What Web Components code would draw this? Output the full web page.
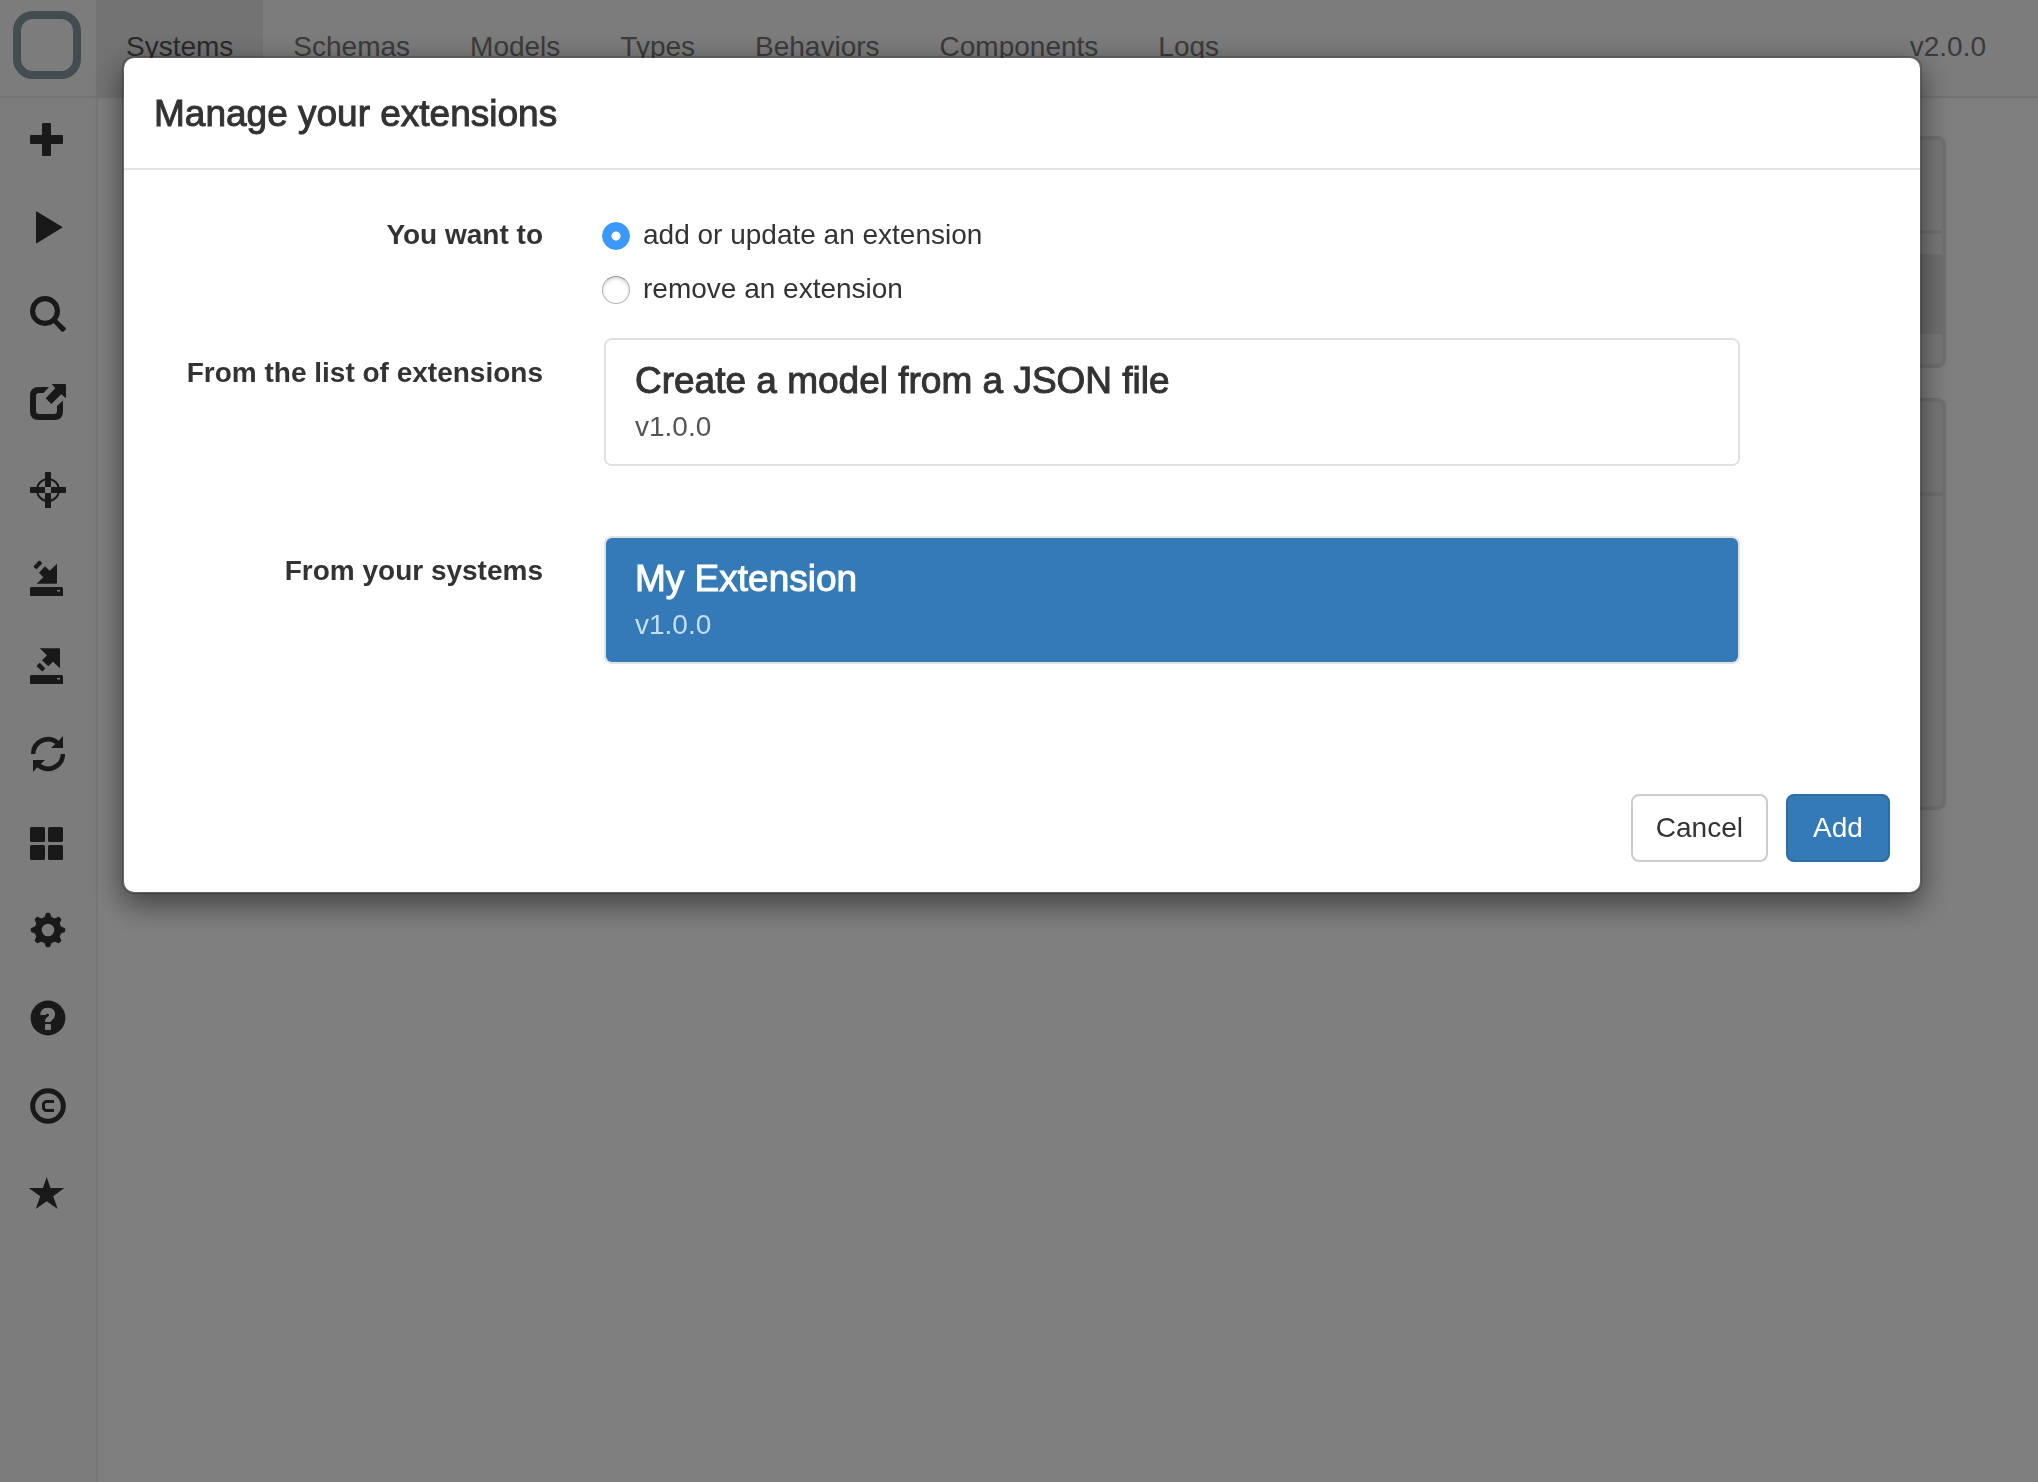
<!DOCTYPE html>
<html lang="en">
<head>
<meta charset="utf-8">
<meta name="viewport" content="width=device-width, initial-scale=1">
<title>Manage your extensions</title>
<style>
  :root {
    --bar: #f8f8f8;
    --line: #e7e7e7;
    --panel-bg: #f3f3f3;
    --panel-line: #e2e2e2;
    --text: #333;
    --muted: #777;
    --primary: #337ab7;
  }
  body {
    margin: 0;
    background: #fff;
    color: var(--text);
    font: 28px/40px "Liberation Sans", Arial, sans-serif;
  }
</style>
</head>
<body>
<app-shell>
  <top-bar slot="top" version="v2.0.0">
    <nav-tab active>Systems</nav-tab>
    <nav-tab>Schemas</nav-tab>
    <nav-tab>Models</nav-tab>
    <nav-tab>Types</nav-tab>
    <nav-tab>Behaviors</nav-tab>
    <nav-tab>Components</nav-tab>
    <nav-tab>Logs</nav-tab>
  </top-bar>
  <side-bar slot="side">
    <icon-button icon="plus" label="Add"></icon-button>
    <icon-button icon="play" label="Run"></icon-button>
    <icon-button icon="search" label="Search"></icon-button>
    <icon-button icon="share" label="Share"></icon-button>
    <icon-button icon="target" label="Locate"></icon-button>
    <icon-button icon="save" label="Import"></icon-button>
    <icon-button icon="open" label="Export"></icon-button>
    <icon-button icon="refresh" label="Refresh"></icon-button>
    <icon-button icon="grid" label="Extensions"></icon-button>
    <icon-button icon="gear" label="Settings"></icon-button>
    <icon-button icon="help" label="Help"></icon-button>
    <icon-button icon="copyright" label="License"></icon-button>
    <icon-button icon="star" label="Favorite"></icon-button>
  </side-bar>
  <content-panel size="list"></content-panel>
  <content-panel size="detail"></content-panel>
</app-shell>
<modal-dialog heading="Manage your extensions">
  <form-row label="You want to">
    <radio-choice></radio-choice>
  </form-row>
  <form-row label="From the list of extensions">
    <extension-item name="Create a model from a JSON file" version="v1.0.0"></extension-item>
  </form-row>
  <form-row label="From your systems">
    <extension-item selected name="My Extension" version="v1.0.0"></extension-item>
  </form-row>
  <app-button slot="footer">Cancel</app-button>
  <app-button slot="footer" primary>Add</app-button>
</modal-dialog>

<script>
  class BaseElement extends HTMLElement {
    connectedCallback() {
      if (this.shadowRoot) return;
      this.attachShadow({ mode: "open" }).innerHTML = this.render();
    }
  }

  customElements.define("app-shell", class extends BaseElement {
    render() {
      return `<style>
        :host { display: flex; flex-direction: column; min-height: 100vh; }
        .body { display: flex; flex: 1; }
        main { flex: 1; display: flex; flex-direction: column; gap: 30px; padding: 38px 92px 0 30px; }
      </style>
      <slot name="top"></slot>
      <div class="body"><slot name="side"></slot><main><slot></slot></main></div>`;
    }
  });

  customElements.define("top-bar", class extends BaseElement {
    render() {
      return `<style>
        :host { display: block; }
        header { display: flex; height: 98px; background: linear-gradient(var(--line), var(--line)) bottom / 100% 2px no-repeat var(--bar); }
        .brand { flex: none; width: 96px; box-sizing: border-box; padding: 11px 13px; }
        .logo { box-sizing: border-box; width: 68px; height: 68px; border: 8px solid #869aa3; border-radius: 20px; }
        nav { display: flex; flex: 1; }
        .version { padding: 27px 52px 0 0; color: var(--muted); }
      </style>
      <header>
        <div class="brand"><div class="logo"></div></div>
        <nav><slot></slot></nav>
        <span class="version">${this.getAttribute("version")}</span>
      </header>`;
    }
  });

  customElements.define("nav-tab", class extends BaseElement {
    render() {
      return `<style>
        :host { display: flex; }
        a { padding: 27px 30px 0; color: var(--muted); text-decoration: none; }
        :host([active]) a { color: #555; background: var(--line); }
      </style>
      <a href="#"><slot></slot></a>`;
    }
  });

  customElements.define("side-bar", class extends BaseElement {
    render() {
      return `<style>
        :host { display: block; flex: none; width: 96px; background: var(--bar); border-right: 2px solid #efefef; }
        nav { display: flex; flex-direction: column; align-items: center; gap: 52px; padding-top: 23px; }
      </style>
      <nav><slot></slot></nav>`;
    }
  });

  const gearTeeth = [0, 45, 90, 135, 180, 225, 270, 315].map(angle =>
    `<path d="M13.800 6 L15.700 .8 Q16 -.2 17 -.2 H19 Q20 -.2 20.300 .8 L22.200 6 Z" transform="rotate(${angle} 18 17)"/>`).join("");
  const refreshArc = `<path d="M1 17 A17 17 0 0 1 28.700 3.700 L33 -1 V11 H21 L25.300 6.900 A12.800 12.800 0 0 0 5.300 17 Z"/>`;
  const drive = `<path fill-rule="evenodd" d="M1.500 26 H31.500 Q33 26 33 27.500 V35 H0 V27.500 Q0 26 1.500 26 Z M27 29 V30.500 H30 V29 Z"/>`;

  const ICONS = {
    plus: `<path d="M13 2 H20 Q21 2 21 3 V14 H32 Q33 14 33 15 V22 Q33 23 32 23 H21 V34 Q21 35 20 35 H13 Q12 35 12 34 V23 H1 Q0 23 0 22 V15 Q0 14 1 14 H12 V3 Q12 2 13 2 Z"/>`,
    play: `<path d="M6 2.800 Q6 2 6.800 2.500 L32 17.700 Q32.600 18.300 32 18.800 L6.800 34.200 Q6 34.600 6 34 Z"/>`,
    search: `<circle cx="15" cy="14" r="12.400" fill="none" stroke="currentColor" stroke-width="5.200"/><path d="M23 25.300 L26.300 22 L35.500 30.800 Q36.500 31.800 35.500 32.800 L33.500 34.600 Q32.500 35.500 31.500 34.600 Z"/>`,
    share: `<path d="M19 2 L13.500 8 H9 Q6 8 6 11 V26 Q6 29 9 29 H24 Q27 29 27 26 V21 L33 15.500 V26.500 Q33 35 24.500 35 H8.500 Q0 35 0 26.500 V10.500 Q0 2 8.500 2 Z"/><path d="M21.700 -1 H35 Q36 -1 36 0 V13.300 L31.300 9.300 L21.300 19 L15.700 13.300 L25.300 3.300 Z"/>`,
    target: `<circle cx="18" cy="17" r="11" fill="none" stroke="currentColor" stroke-width="2"/><rect x="15" y="-1" width="6" height="15" rx=".5"/><rect x="15" y="20" width="6" height="15" rx=".5"/><rect x="0" y="14" width="15" height="6" rx=".5"/><rect x="21" y="14" width="15" height="6" rx=".5"/>`,
    save: `<path d="M27 2.700 V21.700 Q27 22.700 26 22.700 H6.700 L13.300 16.300 L9 11.700 L15 5.300 L19.700 9.700 Z"/><path d="M3.700 5.300 L8.500 0 Q9.300 -.7 10.300 0 L12.300 2.300 L6.700 8.300 L4 6.500 Z"/>${drive}`,
    open: `<path d="M9.700 -.7 H29 Q30 -.7 30 .3 V19.300 L23 12.700 L18.300 17.300 L12 11.300 L17 6.300 Z"/><path d="M9.700 13.700 L15.300 19.300 L13 22 Q12.300 22.500 11.600 21.900 L7 17.500 Q6.500 16.800 7 16.200 Z"/>${drive}`,
    refresh: `${refreshArc}<g transform="rotate(180 18 17)">${refreshArc}</g>`,
    grid: `<rect x="0" y="2" width="15" height="15" rx="1.500"/><rect x="18" y="2" width="15" height="15" rx="1.500"/><rect x="0" y="20" width="15" height="15" rx="1.500"/><rect x="18" y="20" width="15" height="15" rx="1.500"/>`,
    gear: `<circle cx="18" cy="17" r="9.800" fill="none" stroke="currentColor" stroke-width="7"/>${gearTeeth}`,
    help: `<path fill-rule="evenodd" d="M18 -.4 A17.400 17.400 0 1 1 18 34.400 A17.400 17.400 0 1 1 18 -.4 Z M10.300 14 H15.500 C16.500 12.300 19 12.300 19 14 C19 16 15 16 15 21 H21 C21 18.500 25 18.500 25 13 C25 9.500 22.500 6.700 18 6.700 C13 6.700 10.300 9.500 10.300 14 Z M16 23 Q15 23 15 24 V28 Q15 29 16 29 H20 Q21 29 21 28 V24 Q21 23 20 23 Z"/>`,
    copyright: `<circle cx="18" cy="17" r="15.300" fill="none" stroke="currentColor" stroke-width="5"/><path d="M24 12.500 H15.500 L13.500 14.500 V19.500 L15.500 21.500 H24" fill="none" stroke="currentColor" stroke-width="3"/>`,
    star: `<path d="M16.700 0 L20.500 11 H34.300 L23.200 19.300 L27.700 32 L16.700 24.300 L5.700 32 L10.200 19.300 L-1.300 11 H12.900 Z"/>`
  };

  customElements.define("icon-button", class extends BaseElement {
    render() {
      return `<style>
        :host { display: block; }
        button { display: block; margin: 0; padding: 0; border: 0; background: none; color: var(--text); cursor: pointer; }
        svg { display: block; width: 36px; height: 36px; overflow: visible; fill: currentColor; }
      </style>
      <button type="button" aria-label="${this.getAttribute("label")}">
        <svg viewBox="0 0 36 36" aria-hidden="true">${ICONS[this.getAttribute("icon")]}</svg>
      </button>`;
    }
  });

  customElements.define("content-panel", class extends BaseElement {
    render() {
      const list = this.getAttribute("size") === "list";
      return `<style>
        :host { display: block; }
        section { border: 4px solid var(--panel-line); border-radius: 8px; background: var(--panel-bg); }
        .head { height: 90px; border-bottom: 4px solid var(--panel-line); }
        .list { padding: 20px 0 30px; }
        .row { height: 80px; background: #e0e0e0; }
        .detail { height: 310px; }
      </style>
      <section><div class="head"></div>${list
        ? `<div class="list"><div class="row"></div></div>`
        : `<div class="detail"></div>`}</section>`;
    }
  });

  customElements.define("modal-dialog", class extends BaseElement {
    render() {
      return `<style>
        :host { display: block; position: fixed; inset: 0; box-sizing: border-box; padding: 56px 116px 0 122px; background: rgba(0, 0, 0, .5); }
        .box { border: 2px solid rgba(0, 0, 0, .2); border-radius: 12px; background: #fff; background-clip: padding-box; box-shadow: 0 10px 30px rgba(0, 0, 0, .5); }
        header { padding: 30px 30px 28px; border-bottom: 2px solid #e5e5e5; }
        h2 { margin: 0; font-size: 37px; font-weight: 400; line-height: 52px; -webkit-text-stroke: 1px currentColor; }
        .body { display: flex; flex-direction: column; gap: 30px; padding: 30px 0; }
        footer { display: flex; justify-content: flex-end; gap: 18px; padding: 60px 30px 30px; }
      </style>
      <div class="box" role="dialog" aria-modal="true" aria-labelledby="title">
        <header><h2 id="title">${this.getAttribute("heading")}</h2></header>
        <div class="body"><slot></slot></div>
        <footer><slot name="footer"></slot></footer>
      </div>`;
    }
  });

  customElements.define("form-row", class extends BaseElement {
    render() {
      return `<style>
        :host { display: block; }
        .row { display: grid; grid-template-columns: 3fr 8fr 1fr; }
        .label { padding: 15px 30px 0; text-align: right; font-weight: 700; }
        .field { padding: 0 30px 0 31px; }
      </style>
      <div class="row" role="group" aria-labelledby="label">
        <div class="label" id="label">${this.getAttribute("label")}</div>
        <div class="field"><slot></slot></div>
      </div>`;
    }
  });

  customElements.define("radio-choice", class extends BaseElement {
    render() {
      return `<style>
        :host { display: flex; flex-direction: column; align-items: flex-start; gap: 14px; padding: 15px 0 0; margin: 0 0 -1px -2px; }
        label { display: flex; align-items: center; gap: 13px; }
        input { appearance: none; box-sizing: border-box; width: 28px; height: 28px; margin: 2px 0 0; border: 1px solid #b4b4b4; border-top-color: #999; border-radius: 50%; background: #fff; box-shadow: inset 0 2px 3px rgba(0, 0, 0, .15); }
        input:checked { border-color: #3b99fc; background: radial-gradient(circle, #fff 4px, #3b99fc 5px); box-shadow: none; }
      </style>
      <label><input type="radio" name="action" checked>add or update an extension</label>
      <label><input type="radio" name="action">remove an extension</label>`;
    }
  });

  customElements.define("extension-item", class extends BaseElement {
    render() {
      return `<style>
        :host { display: block; margin-bottom: 40px; border: 2px solid #e1e1e1; border-radius: 8px; }
        button { display: block; box-sizing: border-box; width: 100%; margin: 0; padding: 15px 29px 17px; border: 0; border-radius: 6px; background: #fff; color: var(--text); font: inherit; text-align: left; cursor: pointer; }
        .name, .version { display: block; }
        .name { font-size: 37px; line-height: 52px; -webkit-text-stroke: 1px currentColor; }
        .version { color: #555; }
        :host([selected]) button { background: var(--primary); color: #fff; }
        :host([selected]) .version { color: #c7ddef; }
      </style>
      <button type="button" aria-pressed="${this.hasAttribute("selected")}">
        <span class="name">${this.getAttribute("name")}</span>
        <span class="version">${this.getAttribute("version")}</span>
      </button>`;
    }
  });

  customElements.define("app-button", class extends BaseElement {
    render() {
      return `<style>
        :host { display: block; }
        button { display: block; min-width: 104px; margin: 0; padding: 12px 23px; border: 2px solid #ccc; border-radius: 8px; background: #fff; color: var(--text); font: inherit; cursor: pointer; }
        :host([primary]) button { border-color: #2e6da4; background: var(--primary); color: #fff; }
      </style>
      <button type="button"><slot></slot></button>`;
    }
  });
</script>
</body>
</html>
